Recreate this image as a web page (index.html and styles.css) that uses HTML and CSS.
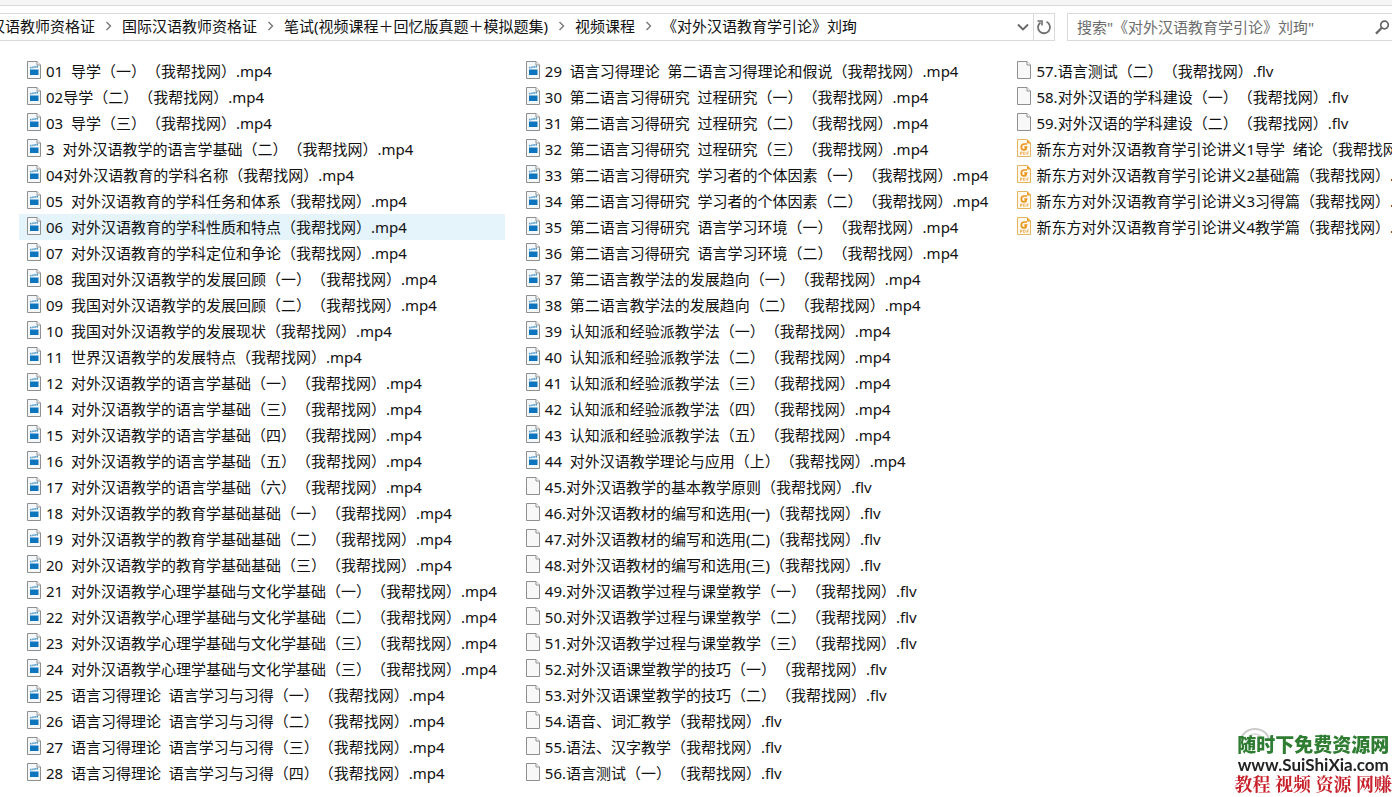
FILE: index.html
```html
<!DOCTYPE html>
<html lang="zh-CN">
<head>
  <meta charset="UTF-8">
  <meta name="viewport" content="width=device-width, initial-scale=1.0">
  <title>《对外汉语教育学引论》刘珣</title>
  <link rel="stylesheet" href="styles.css">
</head>
<body>
  <svg class="sprite" aria-hidden="true">
    <symbol id="icon-mp4" viewBox="0 0 14 18">
      <path d="M.5.5h9.500l3.500 3.500v13.500h-13z" fill="#f4f8fb" stroke="#8f8f8f"/>
      <path d="M10 .5v3.500h3.500" fill="#fff" stroke="#8f8f8f"/>
      <path d="M3 6l8-1.500v2l-8 1z" fill="#4b93c4"/>
      <path d="M4.800 5v2.500M7 4.800v2.500M9.200 4.500v2.500" stroke="#f4f8fb" stroke-width=".7"/>
      <path d="M3 8.500h8.500v5.500h-8.500z" fill="#0c75bd"/>
    </symbol>
    <symbol id="icon-flv" viewBox="0 0 14 18">
      <path d="M.5.5h9.500l3.500 3.500v13.500h-13z" fill="#f8f8f8" stroke="#8f8f8f"/>
      <path d="M10 .5v3.500h3.500" fill="#fff" stroke="#8f8f8f"/>
    </symbol>
    <symbol id="icon-pdf" viewBox="0 0 14 18">
      <path d="M.5.5h9.500l3.500 3.500v13.500h-13z" fill="#fff9ee" stroke="#e5b562"/>
      <path d="M10 0l4 4.500h-4z" fill="#e9a030"/>
      <path d="M10 5h-2.500c-2.200 0-3.200 1.600-3.200 3.200s1 2.600 2.400 2.600 2.500-1.300 2.800-2.800h-2.300" fill="none" stroke="#e9961e" stroke-width="1.700"/>
      <path d="M9.300 8l-.8 3.500" stroke="#e9961e" stroke-width="1.300"/>
      <path d="M3.500 16v-3h1.500v1.500h-1.500M6.500 13v2.500h1.200l.6-1.200-.6-1.300zM10 16v-3h1.800M10 14.500h1.300" fill="none" stroke="#e9a545" stroke-width=".7"/>
    </symbol>
    <symbol id="icon-next" viewBox="0 0 7 10">
      <path d="M1.500 1l4 4-4 4" fill="none" stroke="#777" stroke-width="1.400"/>
    </symbol>
  </svg>

  <div class="ribbon-edge"></div>

  <header class="toolbar">
    <div class="address">
      <nav class="crumbs" aria-label="路径">
        <a href="#">汉语教师资格证</a>
        <svg class="sep"><use href="#icon-next"/></svg>
        <a href="#">国际汉语教师资格证</a>
        <svg class="sep"><use href="#icon-next"/></svg>
        <a href="#">笔试(视频课程＋回忆版真题＋模拟题集)</a>
        <svg class="sep"><use href="#icon-next"/></svg>
        <a href="#">视频课程</a>
        <svg class="sep"><use href="#icon-next"/></svg>
        <a href="#">《对外汉语教育学引论》刘珣</a>
      </nav>
      <button class="address-btn history" type="button" aria-label="历史记录">
        <svg width="12" height="8" viewBox="0 0 12 8"><path d="M1 1.500l5 5 5-5" fill="none" stroke="#666" stroke-width="1.800"/></svg>
      </button>
      <button class="address-btn refresh" type="button" aria-label="刷新">
        <svg width="16" height="16" viewBox="0 0 16 16"><path d="M10.500 2.800a6 6 0 1 1-6 .6" fill="none" stroke="#707070" stroke-width="1.800"/><path d="M1.500 2h4.500v4.500" fill="none" stroke="#707070" stroke-width="1.600"/></svg>
      </button>
    </div>
    <form class="search">
      <input class="search-input" type="text" aria-label="搜索" placeholder='搜索"《对外汉语教育学引论》刘珣"'>
      <button class="search-btn" type="button" aria-label="开始搜索">
        <svg width="15" height="15" viewBox="0 0 15 15"><circle cx="9.500" cy="5" r="3.800" fill="none" stroke="#666" stroke-width="1.700"/><path d="M6.800 7.800l-5.800 5.800" stroke="#666" stroke-width="2.200"/></svg>
      </button>
    </form>
  </header>

  <main>
    <ul class="files" id="files"></ul>
  </main>

  <aside class="watermark">
    <svg class="watermark-arc" width="32" height="16" viewBox="0 0 32 16"><path d="M2 14a14 12 0 0 1 28 0" fill="none" stroke="#ccc" stroke-width="2"/><path d="M8 15a8 8 0 0 1 16 0" fill="none" stroke="#ddd" stroke-width="2"/></svg>
    <div class="watermark-name">随时下免费资源网</div>
    <div class="watermark-url">www.SuiShiXia.com</div>
    <div class="watermark-tags">教程 视频 资源 网赚</div>
  </aside>

  <script>
    const files = [
      '01  导学（一）（我帮找网）.mp4',
      '02导学（二）（我帮找网）.mp4',
      '03  导学（三）（我帮找网）.mp4',
      '3  对外汉语教学的语言学基础（二）（我帮找网）.mp4',
      '04对外汉语教育的学科名称（我帮找网）.mp4',
      '05  对外汉语教育的学科任务和体系（我帮找网）.mp4',
      '06  对外汉语教育的学科性质和特点（我帮找网）.mp4',
      '07  对外汉语教育的学科定位和争论（我帮找网）.mp4',
      '08  我国对外汉语教学的发展回顾（一）（我帮找网）.mp4',
      '09  我国对外汉语教学的发展回顾（二）（我帮找网）.mp4',
      '10  我国对外汉语教学的发展现状（我帮找网）.mp4',
      '11  世界汉语教学的发展特点（我帮找网）.mp4',
      '12  对外汉语教学的语言学基础（一）（我帮找网）.mp4',
      '14  对外汉语教学的语言学基础（三）（我帮找网）.mp4',
      '15  对外汉语教学的语言学基础（四）（我帮找网）.mp4',
      '16  对外汉语教学的语言学基础（五）（我帮找网）.mp4',
      '17  对外汉语教学的语言学基础（六）（我帮找网）.mp4',
      '18  对外汉语教学的教育学基础基础（一）（我帮找网）.mp4',
      '19  对外汉语教学的教育学基础基础（二）（我帮找网）.mp4',
      '20  对外汉语教学的教育学基础基础（三）（我帮找网）.mp4',
      '21  对外汉语教学心理学基础与文化学基础（一）（我帮找网）.mp4',
      '22  对外汉语教学心理学基础与文化学基础（二）（我帮找网）.mp4',
      '23  对外汉语教学心理学基础与文化学基础（三）（我帮找网）.mp4',
      '24  对外汉语教学心理学基础与文化学基础（三）（我帮找网）.mp4',
      '25  语言习得理论  语言学习与习得（一）（我帮找网）.mp4',
      '26  语言习得理论  语言学习与习得（二）（我帮找网）.mp4',
      '27  语言习得理论  语言学习与习得（三）（我帮找网）.mp4',
      '28  语言习得理论  语言学习与习得（四）（我帮找网）.mp4',
      '29  语言习得理论  第二语言习得理论和假说（我帮找网）.mp4',
      '30  第二语言习得研究  过程研究（一）（我帮找网）.mp4',
      '31  第二语言习得研究  过程研究（二）（我帮找网）.mp4',
      '32  第二语言习得研究  过程研究（三）（我帮找网）.mp4',
      '33  第二语言习得研究  学习者的个体因素（一）（我帮找网）.mp4',
      '34  第二语言习得研究  学习者的个体因素（二）（我帮找网）.mp4',
      '35  第二语言习得研究  语言学习环境（一）（我帮找网）.mp4',
      '36  第二语言习得研究  语言学习环境（二）（我帮找网）.mp4',
      '37  第二语言教学法的发展趋向（一）（我帮找网）.mp4',
      '38  第二语言教学法的发展趋向（二）（我帮找网）.mp4',
      '39  认知派和经验派教学法（一）（我帮找网）.mp4',
      '40  认知派和经验派教学法（二）（我帮找网）.mp4',
      '41  认知派和经验派教学法（三）（我帮找网）.mp4',
      '42  认知派和经验派教学法（四）（我帮找网）.mp4',
      '43  认知派和经验派教学法（五）（我帮找网）.mp4',
      '44  对外汉语教学理论与应用（上）（我帮找网）.mp4',
      '45.对外汉语教学的基本教学原则（我帮找网）.flv',
      '46.对外汉语教材的编写和选用(一)（我帮找网）.flv',
      '47.对外汉语教材的编写和选用(二)（我帮找网）.flv',
      '48.对外汉语教材的编写和选用(三)（我帮找网）.flv',
      '49.对外汉语教学过程与课堂教学（一）（我帮找网）.flv',
      '50.对外汉语教学过程与课堂教学（二）（我帮找网）.flv',
      '51.对外汉语教学过程与课堂教学（三）（我帮找网）.flv',
      '52.对外汉语课堂教学的技巧（一）（我帮找网）.flv',
      '53.对外汉语课堂教学的技巧（二）（我帮找网）.flv',
      '54.语音、词汇教学（我帮找网）.flv',
      '55.语法、汉字教学（我帮找网）.flv',
      '56.语言测试（一）（我帮找网）.flv',
      '57.语言测试（二）（我帮找网）.flv',
      '58.对外汉语的学科建设（一）（我帮找网）.flv',
      '59.对外汉语的学科建设（二）（我帮找网）.flv',
      '新东方对外汉语教育学引论讲义1导学  绪论（我帮找网）.pdf',
      '新东方对外汉语教育学引论讲义2基础篇（我帮找网）.pdf',
      '新东方对外汉语教育学引论讲义3习得篇（我帮找网）.pdf',
      '新东方对外汉语教育学引论讲义4教学篇（我帮找网）.pdf'
    ];

    const hovered = 6;

    document.getElementById('files').innerHTML = files.map((name, i) => {
      const type = name.split('.').pop();
      const cls = i === hovered ? 'file is-hover' : 'file';
      return `<li><a class="${cls}" href="#"><svg class="file-icon"><use href="#icon-${type}"/></svg><span>${name}</span></a></li>`;
    }).join('');
  </script>
</body>
</html>
```
FILE: styles.css
```css
* {
  box-sizing: border-box;
}

body {
  margin: 0;
  min-height: 100vh;
  overflow: hidden;
  background: #fff;
  color: #111;
  font-family: "Noto Sans", "Noto Sans CJK SC", sans-serif;
  font-size: 15px;
  line-height: 26px;
  text-spacing-trim: space-all;
}

a {
  color: inherit;
  text-decoration: none;
}

button {
  display: flex;
  align-items: center;
  justify-content: center;
  padding: 0;
  border: 0;
  background: none;
}

.sprite {
  position: absolute;
  width: 0;
  height: 0;
}

.ribbon-edge {
  height: 6px;
  background: #f5f5f5;
  border-bottom: 1px solid #d8d8d8;
}

/* address bar + search */
.toolbar {
  display: flex;
  gap: 12px;
  padding-top: 7px;
}

.address,
.search {
  display: flex;
  height: 28px;
  border: 1px solid #d9d9d9;
}

.address {
  flex: 1;
  min-width: 0;
  border-left: 0;
}

.crumbs {
  display: flex;
  flex: 1;
  align-items: center;
  gap: 10px;
  min-width: 0;
  margin-left: -10px;
  padding-bottom: 2px;
  overflow: hidden;
  white-space: nowrap;
}

.sep {
  flex: none;
  width: 7px;
  height: 10px;
}

.address-btn {
  width: 21px;
}

.refresh {
  border-left: 1px solid #d9d9d9;
}

.search {
  flex: 0 0 325px;
  border-right: 0;
}

.search-input {
  flex: 1;
  min-width: 0;
  padding: 0 0 0 9px;
  border: 0;
  outline: 0;
  background: none;
  font: inherit;
  text-spacing-trim: inherit;
}

.search-input::placeholder {
  color: #6d6d6d;
  opacity: 1;
}

.search-btn {
  width: 20px;
}

/* file list, fills top to bottom like the explorer list view */
.files {
  display: grid;
  grid-auto-flow: column;
  grid-template-rows: repeat(28, 26px);
  grid-auto-columns: max-content;
  column-gap: 13px;
  margin: 0;
  padding: 17px 0 0 19px;
  list-style: none;
}

.file {
  display: flex;
  align-items: center;
  gap: 5px;
  height: 26px;
  padding: 0 8px;
  white-space: pre;
}

.file:hover,
.is-hover {
  background: #e5f3fb;
}

.file-icon {
  flex: none;
  width: 14px;
  height: 18px;
  margin-bottom: 2px;
}

.watermark {
  position: fixed;
  right: 0;
  bottom: 4px;
  font-weight: 700;
  line-height: 19px;
  text-align: center;
  white-space: nowrap;
}

.watermark-arc {
  position: absolute;
  top: -9px;
  left: 4px;
  z-index: -1;
}

.watermark-name {
  color: #2f7d32;
  font-size: 19px;
  font-weight: 900;
}

.watermark-url {
  color: #222;
  font-family: Lato, sans-serif;
  font-size: 17px;
}

.watermark-tags {
  color: #c8202a;
  font-family: "Noto Serif CJK SC", "Noto Sans CJK SC", serif;
  font-size: 18px;
}
```
